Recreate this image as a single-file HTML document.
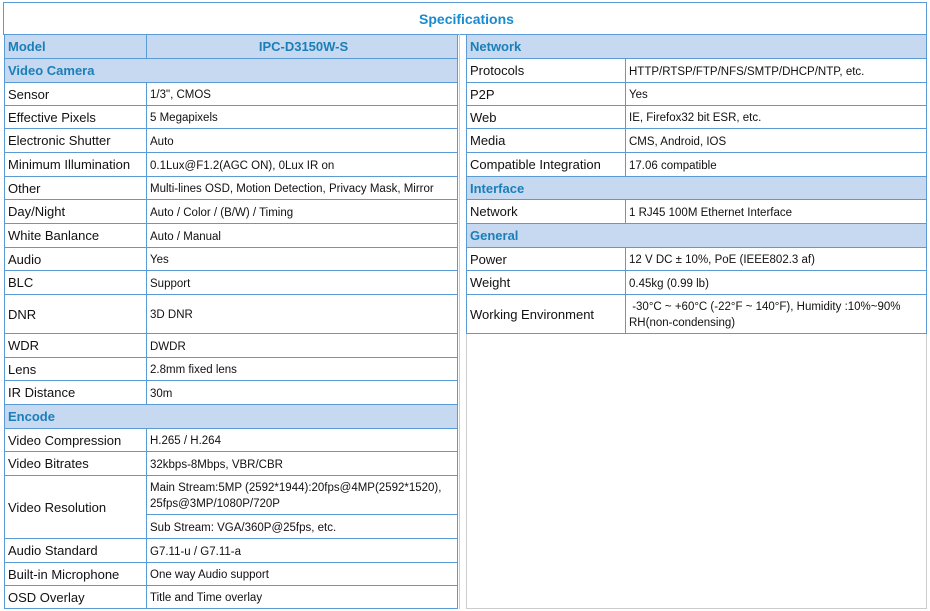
<!DOCTYPE html>
<html><head><meta charset="utf-8"><style>
body{margin:0;width:930px;height:611px;background:#fff;position:relative;overflow:hidden;font-family:"Liberation Sans",Arial,sans-serif;}
.c{position:absolute;box-sizing:border-box;border:1px solid #5b9bd5;display:flex;align-items:center;padding-left:3px;color:#111;font-size:13px;white-space:nowrap;overflow:hidden}
.v{font-size:11.5px;padding-left:3px;padding-top:2px}
.h{background:#c6d9f1;color:#1a7fb8;font-weight:bold;font-size:13px}
.w{white-space:normal;line-height:16px}
</style></head><body>
<div class="c" style="left:3px;top:2px;width:924px;height:33px;justify-content:center;color:#1a8ad0;font-weight:bold;font-size:14px">Specifications</div>
<div style="position:absolute;left:466px;top:333px;width:461px;height:276px;border:1px solid #ccc;border-top:none;box-sizing:border-box"></div>
<div style="position:absolute;left:459px;top:34px;width:1px;height:575px;background:#ccc"></div>
<!-- left -->
<div class="c h" style="left:4px;top:34px;width:143px;height:25px">Model</div>
<div class="c h" style="left:146px;top:34px;width:312px;height:25px;justify-content:center">IPC-D3150W-S</div>
<div class="c h" style="left:4px;top:58px;width:454px;height:25px">Video Camera</div>
<div class="c" style="left:4px;top:82px;width:143px;height:24px">Sensor</div><div class="c v" style="left:146px;top:82px;width:312px;height:24px">1/3", CMOS</div>
<div class="c" style="left:4px;top:105px;width:143px;height:24px">Effective Pixels</div><div class="c v" style="left:146px;top:105px;width:312px;height:24px">5 Megapixels</div>
<div class="c" style="left:4px;top:128px;width:143px;height:25px">Electronic Shutter</div><div class="c v" style="left:146px;top:128px;width:312px;height:25px">Auto</div>
<div class="c" style="left:4px;top:152px;width:143px;height:25px">Minimum Illumination</div><div class="c v" style="left:146px;top:152px;width:312px;height:25px">0.1Lux@F1.2(AGC ON), 0Lux IR on</div>
<div class="c" style="left:4px;top:176px;width:143px;height:24px">Other</div><div class="c v" style="left:146px;top:176px;width:312px;height:24px">Multi-lines OSD, Motion Detection, Privacy Mask, Mirror</div>
<div class="c" style="left:4px;top:199px;width:143px;height:25px">Day/Night</div><div class="c v" style="left:146px;top:199px;width:312px;height:25px">Auto / Color / (B/W) / Timing</div>
<div class="c" style="left:4px;top:223px;width:143px;height:25px">White Banlance</div><div class="c v" style="left:146px;top:223px;width:312px;height:25px">Auto / Manual</div>
<div class="c" style="left:4px;top:247px;width:143px;height:24px">Audio</div><div class="c v" style="left:146px;top:247px;width:312px;height:24px">Yes</div>
<div class="c" style="left:4px;top:270px;width:143px;height:25px">BLC</div><div class="c v" style="left:146px;top:270px;width:312px;height:25px">Support</div>
<div class="c" style="left:4px;top:294px;width:143px;height:40px">DNR</div><div class="c v" style="left:146px;top:294px;width:312px;height:40px">3D DNR</div>
<div class="c" style="left:4px;top:333px;width:143px;height:25px">WDR</div><div class="c v" style="left:146px;top:333px;width:312px;height:25px">DWDR</div>
<div class="c" style="left:4px;top:357px;width:143px;height:24px">Lens</div><div class="c v" style="left:146px;top:357px;width:312px;height:24px">2.8mm fixed lens</div>
<div class="c" style="left:4px;top:380px;width:143px;height:25px">IR Distance</div><div class="c v" style="left:146px;top:380px;width:312px;height:25px">30m</div>
<div class="c h" style="left:4px;top:404px;width:454px;height:25px">Encode</div>
<div class="c" style="left:4px;top:428px;width:143px;height:24px">Video Compression</div><div class="c v" style="left:146px;top:428px;width:312px;height:24px">H.265 / H.264</div>
<div class="c" style="left:4px;top:451px;width:143px;height:25px">Video Bitrates</div><div class="c v" style="left:146px;top:451px;width:312px;height:25px">32kbps-8Mbps, VBR/CBR</div>
<div class="c" style="left:4px;top:475px;width:143px;height:64px">Video Resolution</div>
<div class="c v w" style="left:146px;top:475px;width:312px;height:40px">Main Stream:5MP (2592*1944):20fps@4MP(2592*1520),<br>25fps@3MP/1080P/720P</div>
<div class="c v" style="left:146px;top:514px;width:312px;height:25px">Sub Stream: VGA/360P@25fps, etc.</div>
<div class="c" style="left:4px;top:538px;width:143px;height:25px">Audio Standard</div><div class="c v" style="left:146px;top:538px;width:312px;height:25px">G7.11-u / G7.11-a</div>
<div class="c" style="left:4px;top:562px;width:143px;height:24px">Built-in Microphone</div><div class="c v" style="left:146px;top:562px;width:312px;height:24px">One way Audio support</div>
<div class="c" style="left:4px;top:585px;width:143px;height:24px">OSD Overlay</div><div class="c v" style="left:146px;top:585px;width:312px;height:24px">Title and Time overlay</div>
<!-- right -->
<div class="c h" style="left:466px;top:34px;width:461px;height:25px">Network</div>
<div class="c" style="left:466px;top:58px;width:160px;height:25px">Protocols</div><div class="c v" style="left:625px;top:58px;width:302px;height:25px">HTTP/RTSP/FTP/NFS/SMTP/DHCP/NTP, etc.</div>
<div class="c" style="left:466px;top:82px;width:160px;height:24px">P2P</div><div class="c v" style="left:625px;top:82px;width:302px;height:24px">Yes</div>
<div class="c" style="left:466px;top:105px;width:160px;height:24px">Web</div><div class="c v" style="left:625px;top:105px;width:302px;height:24px">IE, Firefox32 bit ESR, etc.</div>
<div class="c" style="left:466px;top:128px;width:160px;height:25px">Media</div><div class="c v" style="left:625px;top:128px;width:302px;height:25px">CMS, Android, IOS</div>
<div class="c" style="left:466px;top:152px;width:160px;height:25px">Compatible Integration</div><div class="c v" style="left:625px;top:152px;width:302px;height:25px">17.06 compatible</div>
<div class="c h" style="left:466px;top:176px;width:461px;height:24px">Interface</div>
<div class="c" style="left:466px;top:199px;width:160px;height:25px">Network</div><div class="c v" style="left:625px;top:199px;width:302px;height:25px">1 RJ45 100M Ethernet Interface</div>
<div class="c h" style="left:466px;top:223px;width:461px;height:25px">General</div>
<div class="c" style="left:466px;top:247px;width:160px;height:24px">Power</div><div class="c v" style="left:625px;top:247px;width:302px;height:24px">12 V DC ± 10%, PoE (IEEE802.3 af)</div>
<div class="c" style="left:466px;top:270px;width:160px;height:25px">Weight</div><div class="c v" style="left:625px;top:270px;width:302px;height:25px">0.45kg (0.99 lb)</div>
<div class="c" style="left:466px;top:294px;width:160px;height:40px">Working Environment</div><div class="c v w" style="left:625px;top:294px;width:302px;height:40px">&nbsp;-30°C ~ +60°C (-22°F ~ 140°F), Humidity :10%~90%<br>RH(non-condensing)</div>
</body></html>
